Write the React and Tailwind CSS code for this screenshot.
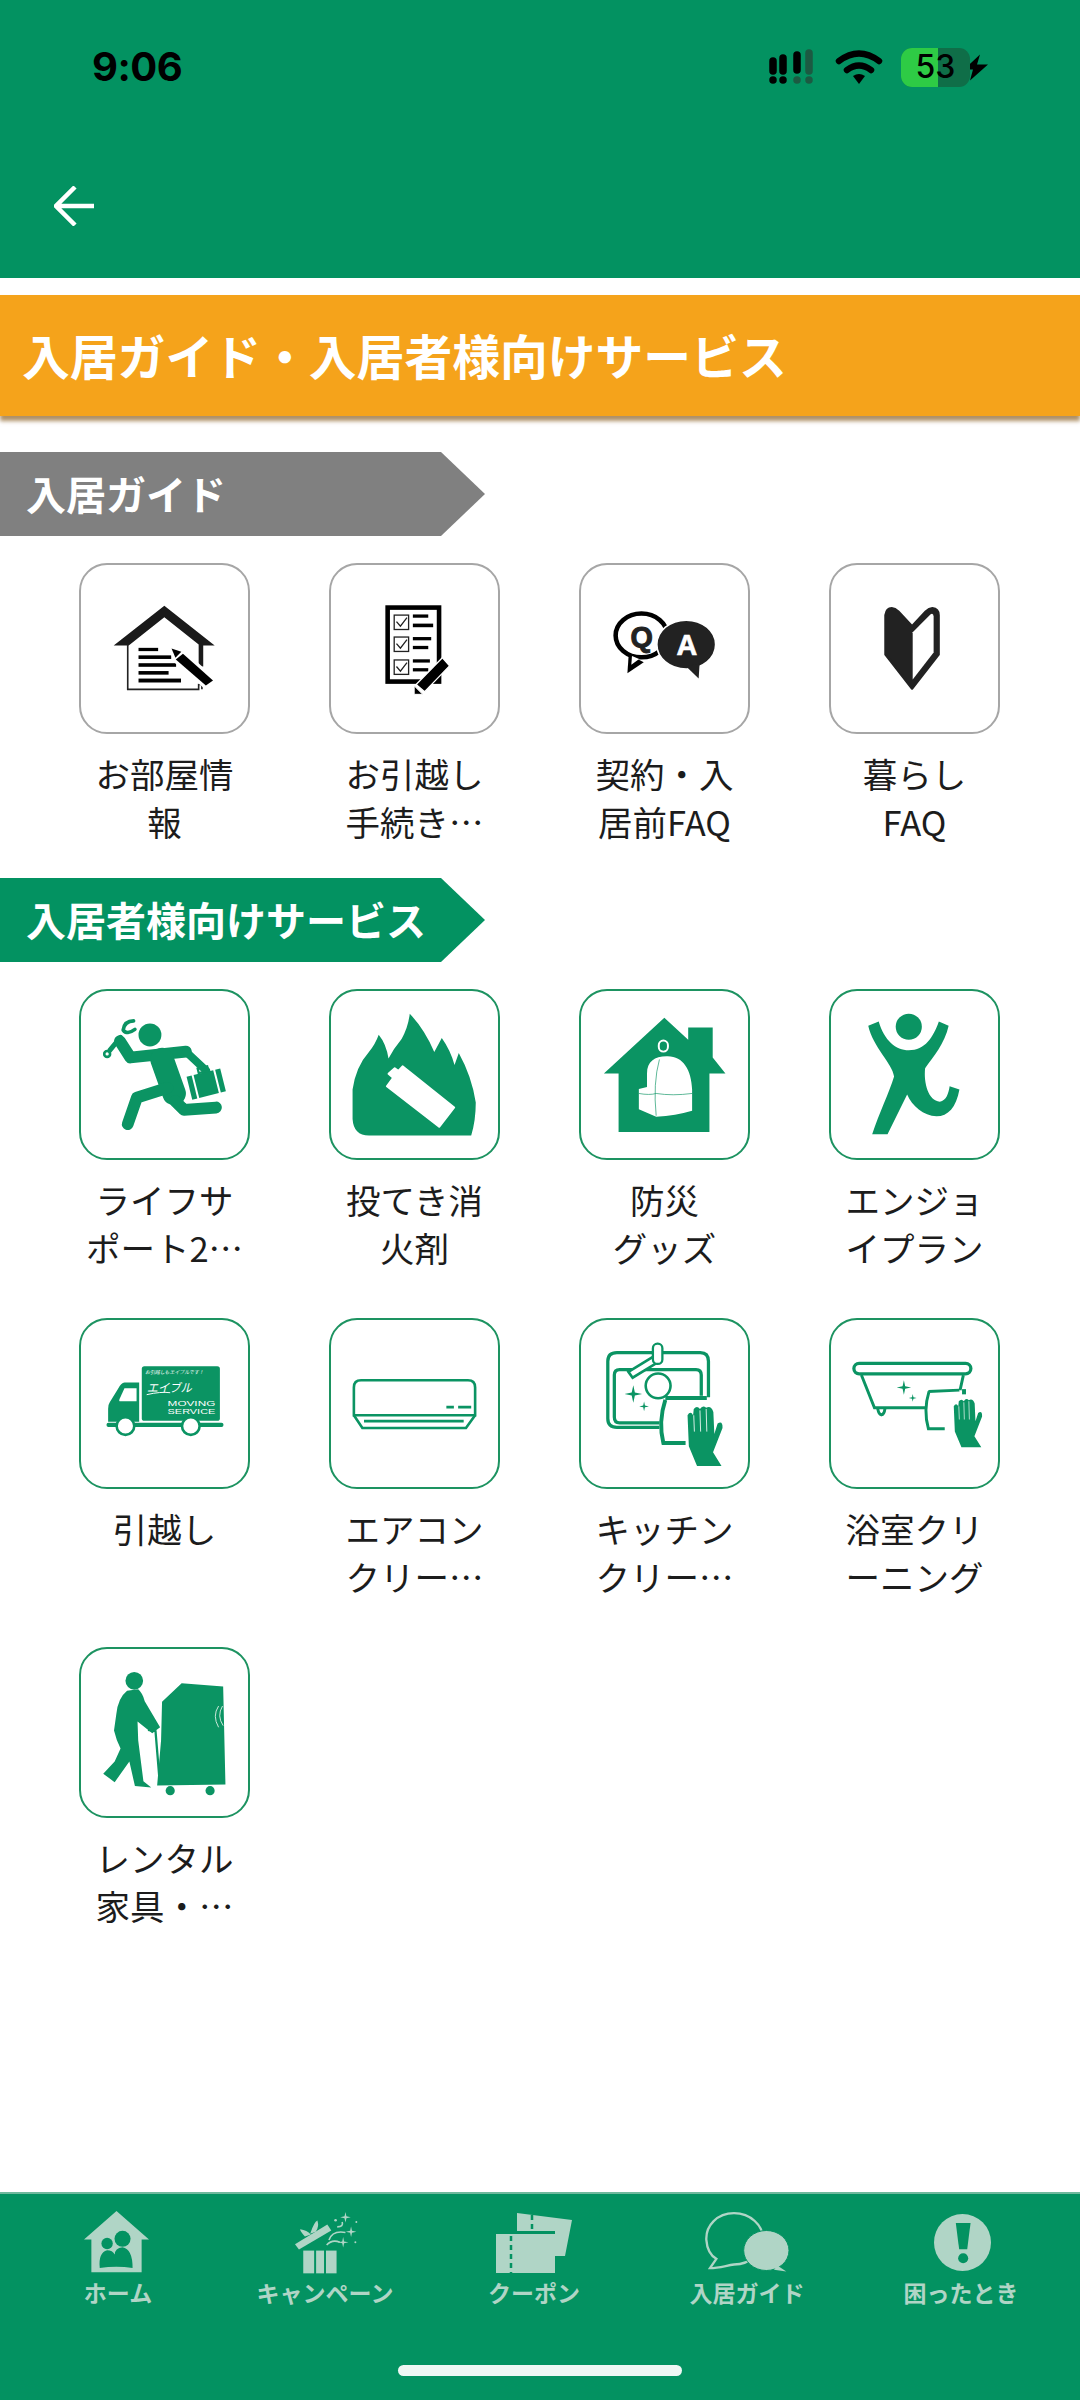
import React from 'react';

const GREEN = '#0b9463';
const NAV = '#b0d5c6';
const NAVBG = '#039261';

const star = (x, y, r) => {
  const k = r * 0.18;
  return `M${x} ${y - r}L${x + k} ${y - k}L${x + r} ${y}L${x + k} ${y + k}L${x} ${y + r}L${x - k} ${y + k}L${x - r} ${y}L${x - k} ${y - k}Z`;
};

const Hand = () => (
  <g>
    <path fill={GREEN} d="M415 500L390 440L386 345Q395 330 403 345L405 326Q415 314 424 326Q432 312 443 322Q458 314 465 335L468 402L478 370Q494 360 493 384L464 458L490 500Z" />
    <path stroke="#fff" strokeWidth="2.5" fill="none" d="M405 345L407 395M424 330L426 395M443 326L445 395" />
  </g>
);

const icons = {
  house: (
    <svg viewBox="28 25 511 510" className="w-full h-full">
      <path fill="#1a1a1a" d="M128 271L283 149L437 271L402 271L402 335L388 335L388 268L283 184L174 271Z" />
      <path fill="none" stroke="#222" strokeWidth="5" d="M171 268V405H388V390H398L398 405" />
      <rect x="204" y="278" width="60" height="10" />
      <rect x="204" y="301" width="100" height="11" />
      <rect x="204" y="325" width="115" height="11" />
      <rect x="204" y="349" width="92" height="11" />
      <rect x="204" y="372" width="130" height="12" />
      <path fill="#fff" d="M298 275L345 285L445 378L408 405L310 320Z" />
      <path d="M305 280L335 290L317 308Z" />
      <path d="M340 296L432 378L410 393L318 314Z" />
    </svg>
  ),
  checklist: (
    <svg viewBox="780 25 510 510" className="w-full h-full">
      <rect x="953" y="155" width="157" height="226" fill="none" stroke="#000" strokeWidth="14" />
      <g fill="none" stroke="#222" strokeWidth="4">
        <rect x="973" y="178" width="44" height="44" />
        <rect x="973" y="245" width="44" height="44" />
        <rect x="973" y="315" width="44" height="44" />
        <path d="M980 198L992 212L1012 186M980 265L992 279L1012 253M980 335L992 349L1012 323" />
      </g>
      <rect x="1030" y="176" width="47" height="10" />
      <rect x="1030" y="204" width="62" height="11" />
      <rect x="1030" y="245" width="56" height="10" />
      <rect x="1030" y="272" width="47" height="10" />
      <rect x="1030" y="313" width="52" height="10" />
      <rect x="1030" y="340" width="47" height="10" />
      <path fill="#000" stroke="#fff" strokeWidth="4" d="M1120 308L1142 333L1066 412L1040 390Z" />
      <path fill="#000" stroke="#fff" strokeWidth="3" d="M1034 394L1060 420H1034Z" />
    </svg>
  ),
  qa: (
    <svg viewBox="30 25 511 510" className="w-full h-full">
      <ellipse cx="215" cy="240" rx="79" ry="67" fill="none" stroke="#000" strokeWidth="14" />
      <path d="M176 298L172 356L222 322Z" />
      <path fill="#fff" d="M186 303L184 330L208 312Z" />
      <text x="216" y="276" textAnchor="middle" fontSize="88" fontWeight="900" stroke="#222" strokeWidth="3" fontFamily="'Liberation Sans', sans-serif" fill="#222">Q</text>
      <ellipse cx="352" cy="268" rx="90" ry="75" fill="#222" stroke="#fff" strokeWidth="5" />
      <path fill="#222" d="M352 335L390 372L393 325Z" />
      <text x="354" y="300" textAnchor="middle" fontSize="88" fontWeight="900" stroke="#fff" strokeWidth="2" fontFamily="'Liberation Sans', sans-serif" fill="#fff">A</text>
    </svg>
  ),
  leaf: (
    <svg viewBox="782 25 511 510" className="w-full h-full">
      <path fill="#222" stroke="#222" strokeWidth="8" strokeLinejoin="round" d="M949 178Q952 157 968 157Q978 157 988 167L1030 212L1072 167Q1082 157 1092 157Q1111 159 1111 178V298L1030 402L949 298Z" />
      <path fill="#fff" d="M1032 230L1086 176Q1095 170 1096 182V292L1032 375Z" />
    </svg>
  ),
  runner: (
    <svg viewBox="57 60 511 508" className="w-full h-full">
      <circle cx="268" cy="193" r="35" fill={GREEN} />
      <g fill="none" stroke={GREEN} strokeLinecap="round" strokeLinejoin="round">
        <path strokeWidth="36" d="M176 212L208 262L378 244" />
        <path strokeWidth="24" d="M378 244L440 302" />
        <path strokeWidth="72" d="M305 268L342 372" />
        <path strokeWidth="36" d="M345 395L372 422L470 415" />
        <path strokeWidth="36" d="M322 355L228 385L200 466" />
        <path strokeWidth="15" d="M178 200L145 240" />
        <circle cx="137" cy="251" r="9" strokeWidth="8" />
        <path strokeWidth="11" d="M218 150Q190 150 186 178Q198 194 222 176" />
      </g>
      <g transform="rotate(-14 445 338)" fill={GREEN}>
        <rect x="386" y="306" width="16" height="72" />
        <rect x="408" y="306" width="62" height="72" />
        <rect x="476" y="306" width="16" height="72" />
        <rect x="425" y="290" width="30" height="14" fill="none" stroke={GREEN} strokeWidth="7" />
      </g>
    </svg>
  ),
  fire: (
    <svg viewBox="809 60 511 508" className="w-full h-full">
      <path fill={GREEN} d="M875 360Q885 290 925 245Q945 220 955 192Q978 220 985 265Q1000 235 1025 205Q1045 170 1050 128Q1095 175 1125 245L1148 202Q1175 240 1187 285L1200 248Q1240 320 1252 400Q1252 455 1238 501L925 501Q878 500 875 450Z" />
      <path fill="#fff" stroke="#fff" strokeWidth="6" strokeLinejoin="round" d="M1028 289L1186 415L1140 474L980 350L999 324L985 312L1004 295L1015 303Z" />
    </svg>
  ),
  bag: (
    <svg viewBox="60 60 511 508" className="w-full h-full">
      <path fill={GREEN} d="M130 311L315 140L388 208V170H463V262L502 311H453V490H175V311Z" />
      <rect x="298" y="210" width="28" height="34" rx="14" fill={GREEN} stroke="#fff" strokeWidth="6" />
      <path fill="#fff" d="M262 352V310C262 275 285 258 322 258C372 256 398 300 400 360V425Q350 440 290 443L237 420V358Z" />
      <path fill="none" stroke={GREEN} strokeWidth="2" d="M237 372Q270 378 290 372Q340 380 400 372M300 268Q280 340 290 440" />
    </svg>
  ),
  jump: (
    <svg viewBox="812 60 511 508" className="w-full h-full">
      <circle cx="1050" cy="168" r="40" fill={GREEN} />
      <path fill={GREEN} d="M926 165L958 152C975 210 1010 240 1050 240C1100 240 1125 200 1142 152L1172 165C1160 220 1125 260 1100 295C1095 340 1110 395 1145 397C1165 395 1172 370 1175 350L1205 360C1195 415 1170 442 1135 442C1095 440 1060 410 1045 375L985 497L938 497C960 430 990 370 1005 320C1000 280 940 230 926 165Z" />
    </svg>
  ),
  truck: (
    <svg viewBox="57 55 511 508" className="w-full h-full">
      <rect x="243" y="195" width="239" height="167" rx="8" fill={GREEN} />
      <path fill={GREEN} d="M235 245H190Q180 245 170 265L145 305Q140 312 140 325V365H235Z" />
      <path fill="#fff" d="M190 262H227V302H177Q172 302 175 295Z" />
      <rect x="135" y="368" width="358" height="13" rx="6" fill={GREEN} />
      <circle cx="193" cy="378" r="27" fill="#fff" stroke={GREEN} strokeWidth="8" />
      <circle cx="393" cy="378" r="27" fill="#fff" stroke={GREEN} strokeWidth="8" />
      <g fill="#fff" fontFamily="'Noto Sans CJK JP', sans-serif">
        <text x="253" y="218" fontSize="15" fontStyle="italic">お引越しもエイブルです！</text>
        <text x="258" y="274" fontSize="36" fontStyle="italic" textLength="138" lengthAdjust="spacingAndGlyphs">エイブル</text>
      </g>
      <path stroke="#fff" strokeWidth="3" fill="none" d="M258 282Q300 272 330 276" />
      <g fill="#fff" fontFamily="'Liberation Sans', sans-serif">
        <text x="322" y="318" fontSize="22" textLength="146" lengthAdjust="spacingAndGlyphs">MOVING</text>
        <text x="322" y="340" fontSize="22" textLength="146" lengthAdjust="spacingAndGlyphs">SERVICE</text>
      </g>
    </svg>
  ),
  aircon: (
    <svg viewBox="809 55 511 508" className="w-full h-full">
      <g fill="none" stroke={GREEN} strokeWidth="8">
        <path d="M879 345V260Q879 238 901 238H1228Q1250 238 1250 260V345Z" />
        <path d="M879 345L905 384H1222L1250 345" />
        <path d="M910 363H1215M1162 320H1185M1198 320H1238" />
      </g>
    </svg>
  ),
  kitchen: (
    <svg viewBox="60 55 511 508" className="w-full h-full">
      <g fill="none" stroke={GREEN} strokeWidth="10">
        <path d="M300 382H170Q142 382 142 355V180Q142 153 170 153H425Q450 153 450 180V290" />
        <path d="M300 368H178Q162 368 162 350V222Q162 205 178 205H412Q428 205 428 222V285" />
      </g>
      <path fill="#fff" stroke={GREEN} strokeWidth="8" d="M205 212L290 160L300 180L218 230Z" />
      <rect x="280" y="126" width="29" height="62" rx="14" fill="#fff" stroke={GREEN} strokeWidth="7" />
      <circle cx="296" cy="255" r="38" fill="#fff" stroke={GREEN} strokeWidth="8" />
      <path fill={GREEN} d={star(220, 280, 27)} />
      <path fill={GREEN} d={star(253, 318, 15)} />
      <path fill="none" stroke={GREEN} strokeWidth="12" d="M318 292H445M318 298Q296 365 312 430H380" />
      <Hand />
    </svg>
  ),
  bath: (
    <svg viewBox="812 55 511 508" className="w-full h-full">
      <rect x="882" y="186" width="358" height="32" rx="16" fill="none" stroke={GREEN} strokeWidth="10" />
      <g fill="none" stroke={GREEN} strokeWidth="9">
        <path d="M905 222L945 322H1105M1217 222L1207 268" />
        <path d="M1110 272L1205 268M1112 272Q1094 330 1110 386H1160" />
        <path d="M955 325Q958 342 966 344Q975 342 977 325" />
      </g>
      <rect x="1213" y="265" width="12" height="16" fill={GREEN} />
      <path fill={GREEN} d={star(1035, 260, 22)} />
      <path fill={GREEN} d={star(1062, 292, 12)} />
      <g transform="translate(875 38) scale(0.81)">
        <Hand />
      </g>
    </svg>
  ),
  mover: (
    <svg viewBox="57 52 511 508" className="w-full h-full">
      <circle cx="220" cy="148" r="27" fill={GREEN} />
      <path fill={GREEN} d="M198 178Q170 200 165 250L158 300Q165 330 178 355L160 395L125 432L160 458L205 395L222 470L272 474L248 455L232 330L230 272L275 308L299 290L252 210Q245 185 232 174Z" />
      <path fill="none" stroke={GREEN} strokeWidth="7" d="M262 298L285 302L298 460" />
      <path fill={GREEN} d="M305 212L365 155L492 165L499 465L290 468L302 330Z" />
      <circle cx="330" cy="484" r="14" fill={GREEN} />
      <circle cx="452" cy="484" r="14" fill={GREEN} />
      <path fill="none" stroke="#cfe8dc" strokeWidth="3" d="M478 225Q458 255 478 290M490 225Q472 255 492 285" />
    </svg>
  ),
};

const guide = [
  { icon: 'house', lines: ['お部屋情', '報'] },
  { icon: 'checklist', lines: ['お引越し', '手続き…'] },
  { icon: 'qa', lines: ['契約・入', '居前FAQ'] },
  { icon: 'leaf', lines: ['暮らし', 'FAQ'] },
];

const services = [
  { icon: 'runner', lines: ['ライフサ', 'ポート2…'] },
  { icon: 'fire', lines: ['投てき消', '火剤'] },
  { icon: 'bag', lines: ['防災', 'グッズ'] },
  { icon: 'jump', lines: ['エンジョ', 'イプラン'] },
  { icon: 'truck', lines: ['引越し'] },
  { icon: 'aircon', lines: ['エアコン', 'クリー…'] },
  { icon: 'kitchen', lines: ['キッチン', 'クリー…'] },
  { icon: 'bath', lines: ['浴室クリ', 'ーニング'] },
  { icon: 'mover', lines: ['レンタル', '家具・…'] },
];

const Tile = ({ item, green }) => (
  <div className="flex flex-col items-center">
    <div className={`w-[171px] h-[171px] rounded-[28px] border-[2.5px] bg-white overflow-hidden ${green ? 'border-[#1d9361]' : 'border-[#a6a6a6]'}`}>
      {icons[item.icon]}
    </div>
    <div className="mt-[15px] h-[96px] w-[190px] text-center text-[34.5px] leading-[48px] text-[#1c1c1c]">
      {item.lines.map((l) => (
        <div key={l} className="whitespace-nowrap">{l}</div>
      ))}
    </div>
  </div>
);

const Ribbon = ({ children, className }) => (
  <div className={`w-[485px] h-[84px] pl-[26px] pb-[2px] flex items-center text-[40px] font-bold text-white [clip-path:polygon(0_0,441px_0,485px_50%,441px_100%,0_100%)] ${className}`}>
    {children}
  </div>
);

const SignalIcon = () => (
  <svg viewBox="0 0 46 36" className="w-[46px] h-[36px]">
    <g stroke="#000" strokeWidth="7.5" strokeLinecap="round">
      <path d="M5 12V22M5 31V31.1M15 9V22M15 31V31.1M29 6V21" />
    </g>
    <g stroke="#1c5a42" strokeWidth="7.5" strokeLinecap="round">
      <path d="M29 31V31.1M41 4V22M41 31V31.1" />
    </g>
  </svg>
);

const WifiIcon = () => (
  <svg viewBox="0 0 48 36" className="w-[48px] h-[36px]">
    <g fill="none" stroke="#000" strokeWidth="6.5" strokeLinecap="round">
      <path d="M4 12Q24 -3 44 12" />
      <path d="M12 21Q24 12 36 21" />
    </g>
    <path d="M18 27Q24 23 30 27L24 35Z" fill="#000" />
  </svg>
);

const BoltIcon = () => (
  <svg viewBox="0 0 24 26" className="w-[24px] h-[27px] -ml-[6px]">
    <path d="M16 0L0 15H9L6 26L24 10H13Z" fill="#000" />
  </svg>
);

const StatusBar = () => (
  <div className="h-[40px] flex items-center justify-between pl-[92px] pr-[92px]">
    <span className="text-[40px] font-bold text-black font-['Inter',sans-serif] tracking-[-0.5px]">9:06</span>
    <div className="flex items-center">
      <SignalIcon />
      <div className="ml-[21px]"><WifiIcon /></div>
      <div className="ml-[18px] w-[69px] h-[39px] rounded-[11px] overflow-hidden flex bg-[#0f6e48] relative">
        <div className="w-[37px] bg-[#2ecb45]" />
        <span className="absolute inset-0 flex items-center justify-center text-[32px] font-medium text-black font-['Inter',sans-serif]">53</span>
      </div>
      <BoltIcon />
    </div>
  </div>
);

const HomeNav = () => (
  <svg viewBox="103 35 194 185" className="h-[62px] w-[65px] -ml-[4px] -mt-[1px]">
    <path fill={NAV} d="M200 35L297 120H275V218H125V120H103Z" />
    <circle cx="172" cy="132" r="17" fill={NAVBG} />
    <circle cx="218" cy="118" r="24" fill={NAVBG} />
    <path fill={NAVBG} d="M150 205Q145 160 172 152Q188 152 195 165Q195 145 218 143Q248 148 248 205Q200 198 150 205Z" />
  </svg>
);

const GiftNav = () => (
  <svg viewBox="730 30 195 188" className="h-[62px] w-[65px] ml-[2px]">
    <g fill={NAV}>
      <rect x="757" y="147" width="33" height="69" />
      <rect x="796" y="147" width="24" height="69" />
      <rect x="826" y="147" width="32" height="69" />
      <path d="M732 128L830 68L842 86L744 144Z" />
      <path d="M778 96Q790 60 800 56Q806 75 795 90ZM762 104Q745 85 748 82Q768 85 780 98Z" />
      <path d={star(885, 46, 16)} />
      <path d={star(902, 90, 16)} />
      <path d={star(878, 122, 16)} />
      <circle cx="855" cy="55" r="4" />
      <circle cx="918" cy="60" r="3" />
      <circle cx="915" cy="122" r="3" />
    </g>
    <path fill="none" stroke={NAV} strokeWidth="5" d="M835 115Q845 85 885 92M828 130Q845 112 868 122M860 75Q880 75 875 60" />
  </svg>
);

const CouponNav = () => (
  <svg viewBox="496 2212 76 60" className="h-[60px] w-[76px] mt-[1px]">
    <path fill={NAV} d="M517 2212L572 2219L565 2255H555V2230H517Z" />
    <rect x="496" y="2233" width="59" height="39" fill={NAV} />
    <path stroke={NAVBG} strokeWidth="2.5" strokeDasharray="5 4" d="M511 2235V2272M532 2214V2230" />
  </svg>
);

const BubbleNav = () => (
  <svg viewBox="198 35 252 185" className="h-[62px] w-[84px]">
    <path fill="none" stroke={NAV} strokeWidth="7" d="M285 38C235 38 200 75 202 118C204 145 215 165 232 175L213 203C240 203 262 195 285 192C335 192 372 155 372 115C372 75 335 38 285 38Z" />
    <ellipse cx="382" cy="150" rx="68" ry="60" fill={NAV} stroke={NAVBG} strokeWidth="3" />
    <path fill={NAV} d="M415 195L442 213L405 208Z" />
  </svg>
);

const AlertNav = () => (
  <svg viewBox="883 45 170 170" className="h-[57px] w-[57px] mt-[2px] ml-[2px]">
    <circle cx="968" cy="130" r="85" fill={NAV} />
    <path fill={NAVBG} d="M948 72H992L982 150H958Z" />
    <circle cx="970" cy="177" r="15" fill={NAVBG} />
  </svg>
);

const NavItem = ({ label, className, children }) => (
  <div className={`flex flex-col items-center ${className}`}>
    <div className="h-[62px] flex items-start">{children}</div>
    <span className="text-[23px] leading-[36px] font-bold text-[#b0d5c6] whitespace-nowrap">{label}</span>
  </div>
);

const App = () => {
  return (
    <div className="w-[1080px] h-[2400px] flex flex-col bg-white font-['Noto_Sans_CJK_JP',sans-serif]">
      <header className="h-[278px] shrink-0 bg-[#039261] pt-[47px]">
        <StatusBar />
        <svg viewBox="0 0 40 40" className="w-[40px] h-[40px] ml-[54px] mt-[99px]" fill="none" stroke="#fff" strokeWidth="4.5">
          <path d="M40 20H2M21 1L2 20L21 39" />
        </svg>
      </header>

      <main className="flex-1">
        <h1 className="mt-[17px] h-[121px] pl-[22px] pb-[1px] flex items-center bg-[#f5a31b] text-[47.8px] font-bold text-white shadow-[0_5px_4px_rgba(120,70,0,0.6)]">
          入居ガイド・入居者様向けサービス
        </h1>

        <div className="mt-[36px]">
          <Ribbon className="bg-[#808080]">入居ガイド</Ribbon>
        </div>
        <div className="mt-[27px] grid grid-cols-[repeat(4,171px)] gap-x-[79px] pl-[79px] justify-items-center">
          {guide.map((item) => (
            <Tile key={item.icon} item={item} />
          ))}
        </div>

        <div className="mt-[33px]">
          <Ribbon className="bg-[#039261]">入居者様向けサービス</Ribbon>
        </div>
        <div className="mt-[27px] grid grid-cols-[repeat(4,171px)] gap-x-[79px] gap-y-[47px] pl-[79px] justify-items-center">
          {services.map((item) => (
            <Tile key={item.icon} item={item} green />
          ))}
        </div>
      </main>

      <nav className="h-[208px] shrink-0 bg-[#039261] border-t-2 border-[#6fb99d] pt-[18px]">
        <div className="flex pl-[12px]">
          <NavItem label="ホーム" className="w-[212px]"><HomeNav /></NavItem>
          <NavItem label="キャンペーン" className="w-[202px]"><GiftNav /></NavItem>
          <NavItem label="クーポン" className="w-[216px]"><CouponNav /></NavItem>
          <NavItem label="入居ガイド" className="w-[210px]"><BubbleNav /></NavItem>
          <NavItem label="困ったとき" className="w-[218px]"><AlertNav /></NavItem>
        </div>
        <div className="mt-[55px] mx-auto w-[284px] h-[11px] rounded-full bg-[#eef7f4]" />
      </nav>
    </div>
  );
};

export default App;
